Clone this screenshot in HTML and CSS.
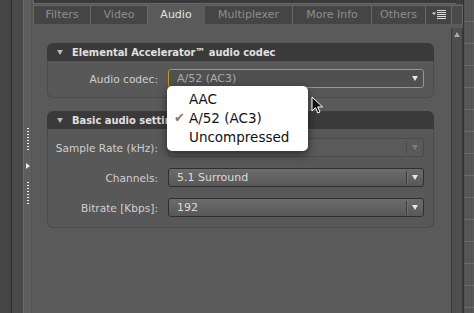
FILE: index.html
```html
<!DOCTYPE html>
<html lang="en">
<head>
  <meta charset="UTF-8">
  <title>Audio settings</title>
  <link rel="stylesheet" href="styles.css">
</head>
<body>
  <div class="app">
    <div class="dock-left"></div>
    <div class="gutter"></div>
    <div class="handle">
      <span class="dots"></span>
      <span class="grip-arrow"></span>
      <span class="dots"></span>
    </div>

    <div class="main">
      <div class="topbar">
        <div class="topbar-box"></div>
        <div class="topbar-cell"></div>
      </div>

      <div class="tabs">
        <div class="tab tab-filters">Filters</div>
        <div class="tab tab-video">Video</div>
        <div class="tab tab-audio active">Audio</div>
        <div class="tab tab-mux">Multiplexer</div>
        <div class="tab tab-info">More Info</div>
        <div class="tab tab-others">Others</div>
        <div class="tab tab-menu">
          <svg width="14" height="9" viewBox="0 0 14 9">
            <path d="M0 2.5h4l-2 2.5z" fill="#ddd"/>
            <path d="M5 0.5h9M5 2.5h9M5 4.5h9M5 6.5h9M5 8.5h9" stroke="#ddd" stroke-width="1"/>
          </svg>
        </div>
        <div class="tab tab-extra"></div>
      </div>

      <div class="content">
        <div class="panel">
          <div class="section">
            <div class="section-head"><span class="disclosure"></span>Elemental Accelerator™ audio codec</div>
            <div class="section-body first">
              <div class="row">
                <span class="label">Audio codec:</span>
                <div class="select focused"><span class="value">A/52 (AC3)</span><span class="sel-btn"></span></div>
              </div>
            </div>
          </div>

          <div class="section">
            <div class="section-head"><span class="disclosure"></span>Basic audio settings</div>
            <div class="section-body">
              <div class="row">
                <span class="label">Sample Rate (kHz):</span>
                <div class="select disabled"><span class="value"></span><span class="sel-btn"></span></div>
              </div>
              <div class="row">
                <span class="label">Channels:</span>
                <div class="select"><span class="value">5.1 Surround</span><span class="sel-btn"></span></div>
              </div>
              <div class="row">
                <span class="label">Bitrate [Kbps]:</span>
                <div class="select"><span class="value">192</span><span class="sel-btn"></span></div>
              </div>
            </div>
          </div>
        </div>
        <div class="scrollbar"><span class="scroll-up"></span></div>
      </div>
    </div>

    <div class="dock-right"></div>
  </div>

  <div class="popup">
    <div class="item"><span class="check"></span>AAC</div>
    <div class="item"><span class="check">✔</span>A/52 (AC3)</div>
    <div class="item"><span class="check"></span>Uncompressed</div>
  </div>

  <svg class="cursor" width="12" height="18" viewBox="0 0 12 18">
    <path d="M1 1v14l3.5-3.3 2.3 5.3 2.2-1-2.3-5.1h4.8z" fill="#111" stroke="#fff" stroke-width="1" stroke-linejoin="round"/>
  </svg>
</body>
</html>
```

FILE: styles.css
```css
* {
  box-sizing: border-box;
}
html, body {
  margin: 0;
  padding: 0;
  width: 474px;
  height: 313px;
  overflow: hidden;
  background: #5a5a5a;
  font-family: "DejaVu Sans", "Liberation Sans", sans-serif;
}
.app {
  display: flex;
  height: 313px;
}
.dock-left {
  width: 12px;
  background: #454545;
  border-right: 1px solid #2e2e2e;
}
.gutter {
  width: 12px;
  background: #4a4a4a;
  border-right: 1px solid #6c6c6c;
}
.handle {
  width: 8px;
  background: #5e5e5e;
  border-right: 1px solid #555;
  display: flex;
  flex-direction: column;
  align-items: center;
  padding-top: 128px;
}
.dots {
  width: 2px;
  height: 22px;
  background: repeating-linear-gradient(to bottom, #eee 0 1px, transparent 1px 3px);
}
.grip-arrow {
  width: 0;
  height: 0;
  margin: 13px 0 13px 1px;
  border-top: 3px solid transparent;
  border-bottom: 3px solid transparent;
  border-left: 4px solid #eee;
}
.main {
  width: 431px;
  display: flex;
  flex-direction: column;
}
.topbar {
  height: 4px;
  display: flex;
}
.topbar-box {
  width: 423px;
  background: #393939;
  border-left: 1px solid #6a6a6a;
  border-bottom: 1px solid #6a6a6a;
  margin-left: 1px;
}
.topbar-cell {
  flex: 1;
  background: #3f3f3f;
}
.tabs {
  height: 20px;
  display: flex;
  padding: 1px 0 0 1px;
  background: #555;
}
.tab {
  height: 19px;
  background: #454545;
  border: 1px solid #686868;
  border-left: none;
  border-bottom: none;
  color: #8e8e8e;
  font-size: 11px;
  display: flex;
  align-items: center;
  justify-content: center;
  padding-bottom: 1px;
}
.tab-filters { width: 58px; border-left: 1px solid #686868; }
.tab-video { width: 57px; }
.tab-audio { width: 57px; }
.tab-mux { width: 88px; }
.tab-info { width: 79px; }
.tab-others { width: 54px; }
.tab-menu { width: 26px; }
.tab-extra { width: 11px; background: #4a4a4a; }
.tab.active {
  background: #5a5a5a;
  color: #e2e2e2;
  border-color: #5f5f5f;
}
.content {
  flex: 1;
  display: flex;
}
.panel {
  width: 419px;
  padding: 19px 17px 0 15px;
  display: flex;
  flex-direction: column;
  gap: 13px;
}
.section-head {
  height: 18px;
  background: #3a3a3a;
  border-radius: 6px 6px 0 0;
  color: #e0e0e0;
  font-family: "DejaVu Sans Condensed", "DejaVu Sans", sans-serif;
  font-stretch: condensed;
  font-weight: bold;
  font-size: 11px;
  display: flex;
  align-items: center;
}
.disclosure {
  width: 0;
  height: 0;
  margin: 1px 9px 0 10px;
  border-left: 3.5px solid transparent;
  border-right: 3.5px solid transparent;
  border-top: 5px solid #b8b8b8;
}
.section-body {
  background: #585858;
  border: 1px solid #4b4b4b;
  border-top: none;
  border-radius: 0 0 6px 6px;
  padding: 9px 9px 10px 0;
  display: flex;
  flex-direction: column;
  gap: 11px;
}
.section-body.first {
  padding: 8px 9px 9px 0;
}
.row {
  display: flex;
  align-items: center;
  height: 19px;
}
.label {
  width: 110px;
  margin-right: 10px;
  text-align: right;
  color: #cfcfcf;
  font-size: 10.6px;
}
.select {
  flex: 1;
  height: 19px;
  border: 1px solid #2f2f2f;
  border-radius: 3px;
  background: linear-gradient(#6c6c6c, #585858);
  display: flex;
  align-items: center;
  color: #dcdcdc;
  font-size: 11px;
}
.value {
  flex: 1;
  padding-left: 8px;
}
.sel-btn {
  width: 17px;
  height: 13px;
  border-left: 1px solid #3c3c3c;
  box-shadow: inset 1px 0 0 #707070;
  display: flex;
  align-items: center;
  justify-content: center;
}
.sel-btn::after {
  content: "";
  width: 0;
  height: 0;
  border-left: 3.5px solid transparent;
  border-right: 3.5px solid transparent;
  border-top: 5px solid #e6e6e6;
}
.select.focused {
  background: #505050;
  border-color: #c99420;
  color: #acacac;
}
.select.focused .sel-btn {
  border-left: none;
  box-shadow: none;
}
.select.disabled {
  background: #5a5a5a;
  border-color: #4a4a4a;
}
.select.disabled .sel-btn {
  border-left-color: #4c4c4c;
  box-shadow: none;
}
.select.disabled .sel-btn::after {
  border-top-color: #7c7c7c;
}
.scrollbar {
  width: 12px;
  margin-top: 4px;
  background: #4e4e4e;
  border-left: 1px solid #3a3a3a;
  border-right: 1px solid #3a3a3a;
  display: flex;
  justify-content: center;
  padding-top: 4px;
}
.scroll-up {
  width: 0;
  height: 0;
  border-left: 3.5px solid transparent;
  border-right: 3.5px solid transparent;
  border-bottom: 5px solid #a8a8a8;
}
.dock-right {
  flex: 1;
  border-left: 1px solid #333;
  background:
    repeating-linear-gradient(to bottom, transparent 0 21px, #6a6a6a 21px 22px),
    repeating-linear-gradient(to right, #545454 0 2px, #5a5a5a 2px 3px);
}
.popup {
  position: absolute;
  left: 167px;
  top: 86px;
  width: 141px;
  height: 65px;
  background: #fff;
  border-radius: 5px;
  box-shadow: 0 3px 10px rgba(0, 0, 0, 0.55);
  padding-top: 3px;
}
.item {
  display: flex;
  align-items: center;
  height: 19px;
  padding-left: 7px;
  font-size: 13.5px;
  color: #111;
}
.check {
  width: 15px;
  color: #7a7a7a;
  font-size: 13px;
}
.cursor {
  position: absolute;
  left: 311px;
  top: 96px;
}
```
